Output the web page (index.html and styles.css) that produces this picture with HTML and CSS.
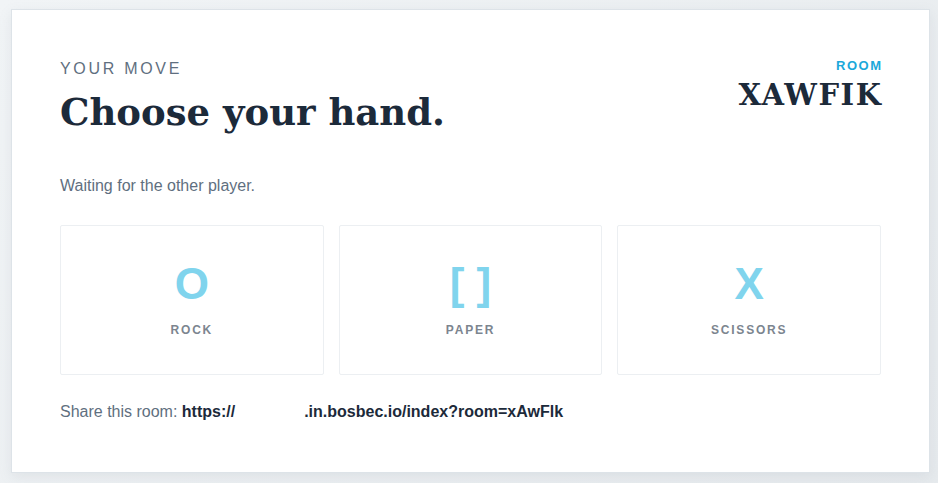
FILE: index.html
```html
<!DOCTYPE html>
<html lang="en">
<head>
<meta charset="utf-8">
<title>Choose your hand</title>
<link rel="stylesheet" href="styles.css">
</head>
<body>
<main class="card">
  <header class="head">
    <div class="head-left">
      <div class="eyebrow">YOUR MOVE</div>
      <h1 class="title">Choose your hand.</h1>
    </div>
    <div class="head-right">
      <div class="room-label">ROOM</div>
      <div class="room-code">XAWFIK</div>
    </div>
  </header>
  <p class="status">Waiting for the other player.</p>
  <div class="hands">
    <button class="hand"><span class="glyph">O</span><span class="hand-label">ROCK</span></button>
    <button class="hand"><span class="glyph">[ ]</span><span class="hand-label">PAPER</span></button>
    <button class="hand"><span class="glyph">X</span><span class="hand-label">SCISSORS</span></button>
  </div>
  <p class="share">Share this room: <strong class="link">https://<span class="redacted"></span>.in.bosbec.io/index?room=xAwFlk</strong></p>
</main>
</body>
</html>
```
FILE: styles.css
```css
html, body {
  margin: 0;
  height: 100%;
}
body {
  background: linear-gradient(135deg, #f1f4f6 0%, #e6eaed 100%);
  padding: 9px 8px 10px 11px;
  box-sizing: border-box;
  font-family: "Liberation Sans", Arial, sans-serif;
}
.card {
  box-sizing: border-box;
  width: 919px;
  height: 464px;
  background: #fff;
  border: 1px solid #dde3e8;
  box-shadow: 0 4px 12px rgba(120, 135, 150, 0.12);
  padding: 48px 48px 0 48px;
}
.head {
  display: flex;
  justify-content: space-between;
  align-items: flex-start;
}
.eyebrow {
  font-size: 16px;
  line-height: 18px;
  letter-spacing: 2.7px;
  color: #5f6f80;
  margin-top: 2px;
}
.title {
  margin: 12px 0 0;
  font-family: "DejaVu Serif", Georgia, serif;
  font-weight: 700;
  font-size: 37px;
  line-height: 44px;
  color: #1c2a3a;
}
.head-right {
  text-align: right;
}
.room-label {
  font-size: 13px;
  line-height: 16px;
  font-weight: 700;
  letter-spacing: 1.5px;
  color: #1ba8da;
  margin-right: -1.5px;
}
.room-code {
  margin-top: 4px;
  font-family: "DejaVu Serif", Georgia, serif;
  font-weight: 700;
  font-size: 29px;
  line-height: 34px;
  letter-spacing: 1.6px;
  margin-right: -1.6px;
  color: #1c2a3a;
}
.status {
  margin: 43px 0 0;
  font-size: 16px;
  line-height: 18px;
  color: #5f6f80;
}
.hands {
  margin-top: 30px;
  display: grid;
  grid-template-columns: repeat(3, 1fr);
  gap: 15px;
}
.hand {
  height: 150px;
  background: #fff;
  border: 1px solid #eceff2;
  border-radius: 2px;
  display: flex;
  flex-direction: column;
  align-items: center;
  justify-content: flex-start;
  padding: 33px 0 0;
  font-family: "Liberation Sans", Arial, sans-serif;
}
.glyph {
  font-size: 44px;
  line-height: 50px;
  font-weight: 700;
  color: #80d4ed;
}
.hand-label {
  margin-top: 14px;
  font-size: 12px;
  line-height: 14px;
  font-weight: 700;
  letter-spacing: 1.8px;
  color: #7c858f;
}
.share {
  margin: 28px 0 0;
  font-size: 16px;
  line-height: 18px;
  color: #5f6f80;
}
.link {
  color: #1c2a3a;
}
.redacted {
  display: inline-block;
  width: 69px;
}
```
